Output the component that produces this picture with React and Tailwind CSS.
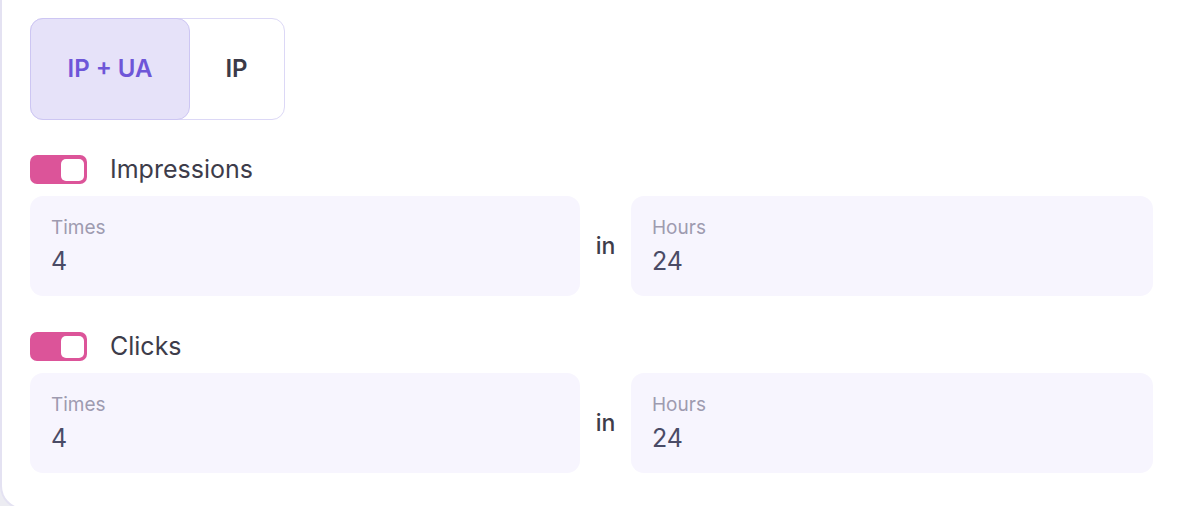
import React, { useState } from "react";

const Toggle = ({ on, onClick }) => (
  <button
    onClick={onClick}
    className={`flex h-[29px] w-[57px] items-center rounded-[7px] p-[3px] ${
      on ? "justify-end bg-[#dc5499]" : "justify-start bg-[#d8d6e3]"
    }`}
  >
    <span className="block h-[22px] w-[23px] rounded-[5px] bg-white" />
  </button>
);

const Field = ({ label, value, className }) => (
  <div className={`flex h-[100px] flex-col rounded-[13px] bg-[#f7f5fe] pl-[21px] pt-[20px] ${className}`}>
    <span className="text-[19px] leading-[24px] text-[#9e9bb0]">{label}</span>
    <span className="mt-[6px] text-[25px] leading-[30px] text-[#4a4b66]">{value}</span>
  </div>
);

const LimitRow = ({ title, times, hours }) => {
  const [on, setOn] = useState(true);
  return (
    <div className="flex flex-col">
      <div className="flex h-[29px] items-center gap-[23px]">
        <Toggle on={on} onClick={() => setOn(!on)} />
        <span className="text-[25px] leading-[29px] text-[#3d3c4a]">{title}</span>
      </div>
      <div className="mt-[12px] flex items-center">
        <Field label="Times" value={times} className="w-[550px]" />
        <span className="w-[51px] text-center text-[23px] font-medium text-[#3d3c4a]">in</span>
        <Field label="Hours" value={hours} className="flex-1" />
      </div>
    </div>
  );
};

const App = () => {
  const [mode, setMode] = useState("ipua");

  return (
    <div className="h-[506px] w-[1198px] overflow-hidden bg-[#ececf2] font-['Inter',sans-serif]">
      <div className="h-[510px] rounded-bl-[24px] border-l-2 border-b-2 border-[#e4e2f2] bg-white pl-[28px] pr-[45px] pt-[18px]">
        <div className="flex h-[102px] w-[255px] rounded-[13px] border border-[#dcd8f6]">
          <button
            onClick={() => setMode("ipua")}
            className={`-m-px flex w-[160px] items-center justify-center rounded-[13px] border text-[24px] font-semibold ${
              mode === "ipua"
                ? "border-[#cdc6f3] bg-[#e6e2f9] text-[#6e56d8]"
                : "border-transparent text-[#3b3a48]"
            }`}
          >
            IP + UA
          </button>
          <button
            onClick={() => setMode("ip")}
            className={`-my-px flex flex-1 items-center justify-center rounded-[13px] border text-[24px] font-semibold ${
              mode === "ip"
                ? "border-[#cdc6f3] bg-[#e6e2f9] text-[#6e56d8]"
                : "border-transparent text-[#3b3a48]"
            }`}
          >
            IP
          </button>
        </div>

        <div className="mt-[35px] flex flex-col gap-[36px]">
          <LimitRow title="Impressions" times="4" hours="24" />
          <LimitRow title="Clicks" times="4" hours="24" />
        </div>
      </div>
    </div>
  );
};

export default App;
